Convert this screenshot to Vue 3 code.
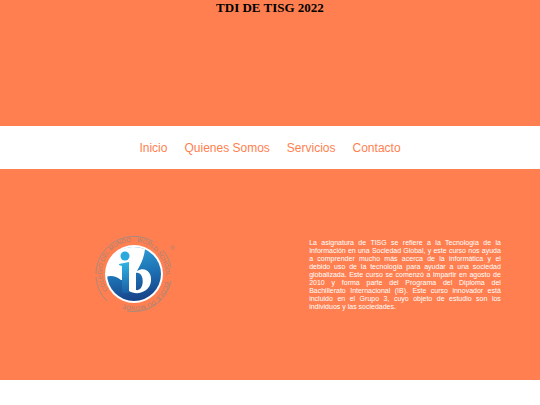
<template>
  <div class="page">
    <header class="header">
      <h1 class="title">TDI DE TISG 2022</h1>
    </header>

    <nav class="menu">
      <a v-for="link in links" :key="link.href" :href="link.href" class="menu-link">{{ link.label }}</a>
    </nav>

    <main class="content">
      <div class="column">
        <svg class="logo" viewBox="0 0 80 80" role="img" aria-label="Logo IB">
          <defs>
            <linearGradient id="disc" x1="0.4" y1="0" x2="0.6" y2="1">
              <stop offset="0" stop-color="#2f9fd6" />
              <stop offset="0.5" stop-color="#1d72b4" />
              <stop offset="1" stop-color="#173f86" />
            </linearGradient>
            <linearGradient id="stem" x1="0" y1="0" x2="0" y2="1">
              <stop offset="0" stop-color="#2fb4e4" />
              <stop offset="1" stop-color="#1a5fa4" />
            </linearGradient>
            <path id="ring" d="M12.5 55A31 31 0 1 1 65.5 23A31 31 0 1 1 12.5 55" />
          </defs>
          <path class="ring" d="M1 39A38 38 0 0 1 58 6.5M68 15A38 38 0 0 1 76 33M76 46A38 38 0 0 1 32 76M12 66A38 38 0 0 1 1 42" />
          <text class="ring-text">
            <textPath href="#ring">COLEGIO DEL MUNDO · WORLD SCHOOL · ÉCOLE DU MONDE ·</textPath>
          </text>
          <circle cx="39" cy="39" r="29" fill="#fff" />
          <circle cx="39" cy="39" r="27" fill="url(#disc)" />
          <path fill="#fff" d="M11 42C10 22 27 6 50 14C49 23 46 29 42 36L34 45H26C21 41 16 40 11 42Z" />
          <circle cx="30" cy="21" r="4.5" fill="#2ba9dc" />
          <path fill="url(#stem)" d="M24 29L34 27V58H27V31L24 30Z" />
          <path fill="#fff" fill-rule="evenodd" d="M34 27H42V36C50 31 57 37 56 46C55 57 42 61 34 56ZM41 38V55C50 57 50 36 41 38Z" />
          <text class="ring-text" x="75" y="15">®</text>
        </svg>
      </div>
      <div class="column">
        <p class="description">
          La asignatura de TISG se refiere a la Tecnología de la Información en una Sociedad Global, y este
          curso nos ayuda a comprender mucho más acerca de la informática y el debido uso de la tecnología
          para ayudar a una sociedad globalizada. Este curso se comenzó a impartir en agosto de 2010 y forma
          parte del Programa del Diploma del Bachillerato&nbsp;Internacional (IB). Este curso innovador está
          incluido en el Grupo 3, cuyo objeto de estudio son los individuos&nbsp;y las sociedades.
        </p>
      </div>
    </main>
  </div>
</template>

<script setup>
const links = [
  { label: 'Inicio', href: '#inicio' },
  { label: 'Quienes Somos', href: '#quienes-somos' },
  { label: 'Servicios', href: '#servicios' },
  { label: 'Contacto', href: '#contacto' }
]
</script>

<style>
body {
  margin: 0;
  background: #fff;
}
</style>

<style scoped>
.header {
  min-height: 126px;
  background: #ff7f50;
}

.title {
  margin: 0;
  font-family: "Liberation Serif", "Times New Roman", serif;
  font-size: 13px;
  line-height: 16px;
  text-align: center;
}

.menu {
  display: flex;
  justify-content: center;
  gap: 17px;
  padding: 15px 0 13px;
  background: #fff;
}

.menu-link {
  font-family: "Liberation Sans", Arial, sans-serif;
  font-size: 12px;
  line-height: 15px;
  color: #ff7f50;
  text-decoration: none;
}

.content {
  display: grid;
  grid-template-columns: 1fr 1fr;
  align-items: center;
  min-height: 211px;
  background: #ff7f50;
}

.column {
  display: flex;
  justify-content: center;
}

.logo {
  width: 80px;
  height: 80px;
  overflow: visible;
}

.ring {
  fill: none;
  stroke: #a98a7c;
  stroke-width: 1;
}

.ring-text {
  font-family: "Liberation Sans", Arial, sans-serif;
  font-size: 6px;
  fill: #a08578;
}

.description {
  width: 71%;
  margin: 0;
  font-family: "Liberation Sans", Arial, sans-serif;
  font-size: 7px;
  line-height: 8px;
  color: #fff;
  text-align: justify;
}
</style>
